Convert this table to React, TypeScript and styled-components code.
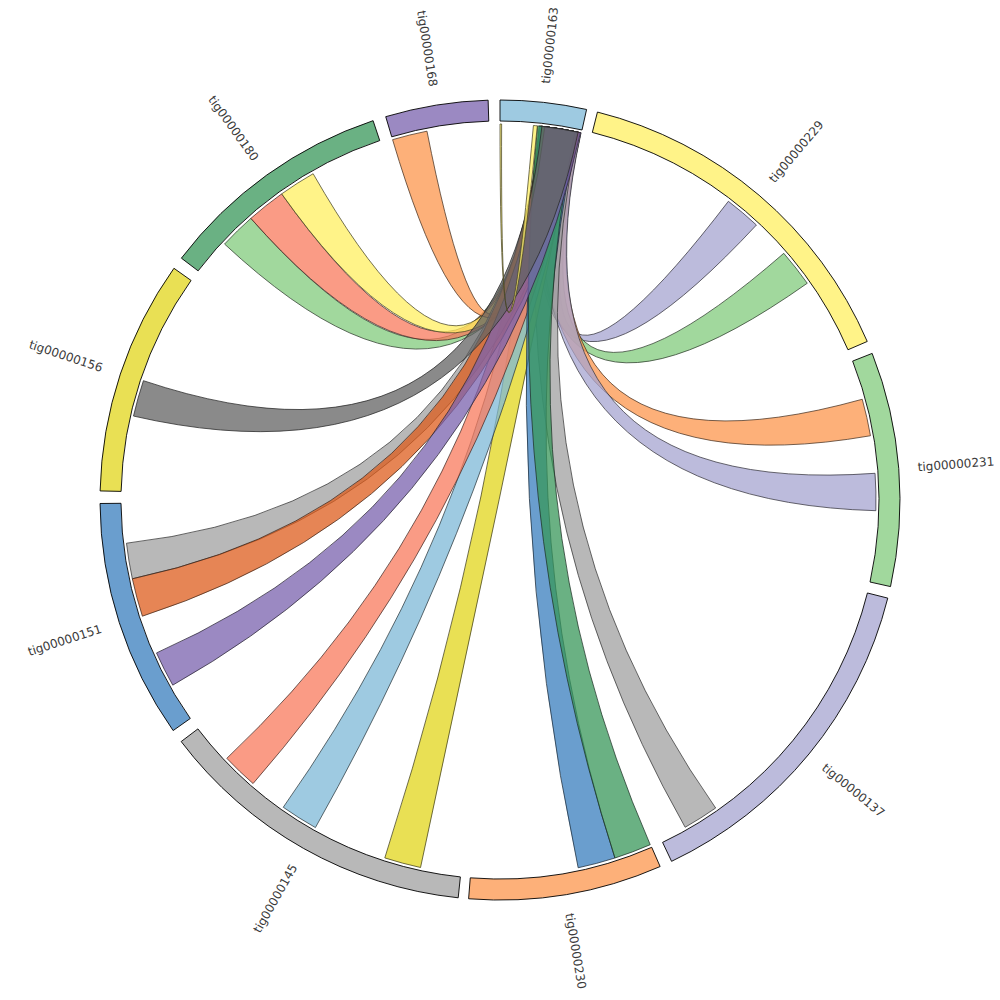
import styled, { createGlobalStyle } from 'styled-components';

const GlobalStyle = createGlobalStyle`
  html, body {
    margin: 0;
    padding: 0;
    background: #ffffff;
  }
`;

const OUTER = 400;
const INNER = 379;
const RIBBON = 376;
const LABEL_R = 419;
const CHORD_ALPHA = 0.75;

type Group = { name: string; start: number; end: number; color: string };
type Chord = { s0: number; t0: number; t1: number; color: string; s1?: number };

const palette = {
  lightBlue: '#9ecae1',
  lightYellow: '#fff388',
  lightGreen: '#a1d89d',
  lavender: '#bcbbdc',
  orange: '#fdb079',
  gray: '#b8b8b8',
  blue: '#6a9ece',
  yellow: '#e9e054',
  green: '#6ab183',
  purple: '#9b89c2',
  salmon: '#fa9b85',
  darkGray: '#8a8a8a',
  darkOrange: '#e68555',
};

const groups: Group[] = [
  { name: 'tig00000163', start: 0, end: 12.5, color: palette.lightBlue },
  { name: 'tig00000229', start: 14.1, end: 66.65, color: palette.lightYellow },
  { name: 'tig00000231', start: 68.5, end: 102.5, color: palette.lightGreen },
  { name: 'tig00000137', start: 104.2, end: 154.6, color: palette.lavender },
  { name: 'tig00000230', start: 156.4, end: 184.5, color: palette.orange },
  { name: 'tig00000145', start: 186.0, end: 232.85, color: palette.gray },
  { name: 'tig00000151', start: 234.8, end: 269.5, color: palette.blue },
  { name: 'tig00000156', start: 271.3, end: 305.4, color: palette.yellow },
  { name: 'tig00000180', start: 307.2, end: 341.5, color: palette.green },
  { name: 'tig00000168', start: 343.4, end: 358.3, color: palette.purple },
];

// drawing order matters: the last ones give the dark knot under tig00000163
const chords: Chord[] = [
  { s0: 6.4, t0: 312.9, t1: 318.5, color: palette.lightGreen },
  { s0: 6.3, t0: 318.5, t1: 324.5, color: palette.salmon },
  { s0: 6.2, t0: 324.5, t1: 330.2, color: palette.lightYellow },
  { s0: 6.5, t0: 343.4, t1: 348.8, color: palette.orange },
  { s0: 6.8, t0: 37.4, t1: 43.0, color: palette.lavender },
  { s0: 6.6, t0: 49.0, t1: 54.8, color: palette.lightGreen },
  { s0: 6.7, t0: 74.46, t1: 80.16, color: palette.orange },
  { s0: 6.8, t0: 85.93, t1: 91.63, color: palette.lavender },
  { s0: 6.5, t0: 145.0, t1: 150.5, color: palette.gray },
  { s0: 6.0, t0: 192.2, t1: 197.84, color: palette.yellow },
  { s0: 6.2, t0: 209.4, t1: 215.2, color: palette.lightBlue },
  { s0: 6.3, t0: 221.05, t1: 226.6, color: palette.salmon },
  { s0: 6.4, t0: 257.9, t1: 263.4, color: palette.gray },
  { s0: 6.3, t0: 252.0, t1: 257.9, color: palette.darkOrange },
  { s0: 6.0, t0: 162.2, t1: 168.0, color: palette.blue },
  { s0: 5.74, t0: 156.45, t1: 162.2, color: palette.green },
  { s0: 6.85, t0: 240.5, t1: 246.0, color: palette.purple },
  { s0: 6.4, t0: 282.9, t1: 288.5, color: palette.darkGray },
  // thin self link inside tig00000163
  { s0: 0, s1: 0.25, t0: 5.1, t1: 5.7, color: palette.lightYellow },
];

const rad = (d: number) => (d * Math.PI) / 180;
const pt = (r: number, a: number) =>
  `${(r * Math.sin(rad(a))).toFixed(2)},${(-r * Math.cos(rad(a))).toFixed(2)}`;

const hexToRgb = (hex: string) => [1, 3, 5].map((i) => parseInt(hex.slice(i, i + 2), 16));

// colour that shows as `hex` on white once drawn at CHORD_ALPHA
const baseColor = (hex: string) => {
  const c = hexToRgb(hex).map((v) =>
    Math.max(0, Math.min(255, Math.round((v - 255 * (1 - CHORD_ALPHA)) / CHORD_ALPHA)))
  );
  return `rgb(${c.join(',')})`;
};

const edgeColor = (hex: string) => {
  const c = hexToRgb(hex).map((v) => Math.round(v * 0.28));
  return `rgb(${c.join(',')})`;
};

const arcPath = (a0: number, a1: number) => {
  const large = a1 - a0 > 180 ? 1 : 0;
  return `M${pt(OUTER, a0)} A${OUTER},${OUTER} 0 ${large} 1 ${pt(OUTER, a1)} L${pt(INNER, a1)} A${INNER},${INNER} 0 ${large} 0 ${pt(INNER, a0)} Z`;
};

const ribbonPath = (s0: number, s1: number, t0: number, t1: number) => {
  const r = RIBBON;
  return `M${pt(r, s0)} A${r},${r} 0 0 1 ${pt(r, s1)} Q0,0 ${pt(r, t0)} A${r},${r} 0 0 1 ${pt(r, t1)} Q0,0 ${pt(r, s0)} Z`;
};

const App = () => (
  <Page>
    <GlobalStyle />
    <ChartSvg viewBox="-500 -500 1000 1000">
      <g>
        {chords.map(({ s0, s1, t0, t1, color }, i) => (
          <Ribbon
            key={i}
            d={ribbonPath(s0, Math.min(s1 ?? s0 + (t1 - t0), 12.45), t0, t1)}
            $fill={baseColor(color)}
            $edge={edgeColor(color)}
          />
        ))}
      </g>
      <g>
        {groups.map(({ name, start, end, color }) => {
          const mid = (start + end) / 2;
          const flip = mid > 180;
          return (
            <g key={name}>
              <GroupArc d={arcPath(start, end)} $fill={color} />
              <Label
                dy=".35em"
                $flip={flip}
                transform={`rotate(${(mid - 90).toFixed(2)}) translate(${LABEL_R},0)${flip ? ' rotate(180)' : ''}`}
              >
                {name}
              </Label>
            </g>
          );
        })}
      </g>
    </ChartSvg>
  </Page>
);

export default App;

const Page = styled('div')`
  width: 1000px;
  height: 1000px;
  display: flex;
  align-items: center;
  justify-content: center;
  background: #ffffff;
`;

const ChartSvg = styled('svg')`
  width: 1000px;
  height: 1000px;
  display: block;
`;

const Ribbon = styled('path')<{ $fill: string; $edge: string }>`
  fill: ${({ $fill }) => $fill};
  fill-opacity: ${CHORD_ALPHA};
  stroke: ${({ $edge }) => $edge};
  stroke-width: 0.75px;
`;

const GroupArc = styled('path')<{ $fill: string }>`
  fill: ${({ $fill }) => $fill};
  stroke: #000000;
  stroke-width: 0.9px;
`;

const Label = styled('text')<{ $flip: boolean }>`
  font-family: 'DejaVu Sans', 'Liberation Sans', sans-serif;
  font-size: 12px;
  fill: #3a3a3a;
  text-anchor: ${({ $flip }) => ($flip ? 'end' : 'start')};
`;
